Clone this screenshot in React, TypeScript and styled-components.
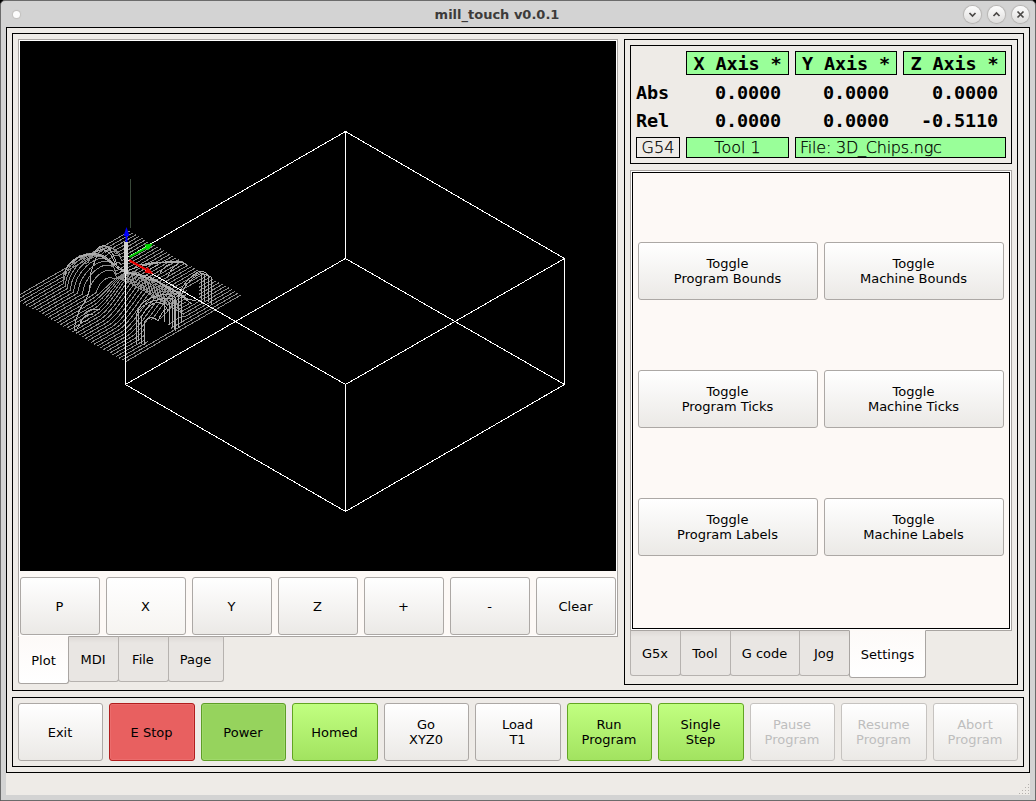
import React from "react";
import styled, { createGlobalStyle, css } from "styled-components";

const GlobalStyle = createGlobalStyle`
  * { box-sizing: border-box; }
  html, body { margin: 0; padding: 0; background: #000; }
  body { font-family: "DejaVu Sans", sans-serif; font-size: 13px; line-height: 15px; color: #000; }
`;

const Window = styled.div`
  width: 1036px;
  height: 801px;
  display: flex;
  flex-direction: column;
  background: #d3d3d3;
  border: 1px solid #6b6b6b;
  border-radius: 5px 5px 0 0;
  padding: 0 5px 5px;
  overflow: hidden;
`;

const TitleBar = styled.header`
  height: 26px;
  flex: none;
  display: grid;
  grid-template-columns: 76px 1fr 76px;
  align-items: center;
  margin: 0 -5px;
  padding: 0 6px 0 12px;
`;

const MenuDot = styled.span`
  width: 7px;
  height: 7px;
  border-radius: 50%;
  background: #fcfcfc;
  box-shadow: 0 0 1px 1px #c2c0be;
`;

const Title = styled.h1`
  margin: 0;
  padding-right: 48px;
  text-align: center;
  font-size: 13px;
  line-height: 15px;
  font-weight: bold;
  color: #3d3b3a;
`;

const WindowButtons = styled.div`
  display: flex;
  justify-content: flex-end;
  gap: 7px;
`;

const RoundButton = styled.span`
  width: 17px;
  height: 17px;
  border-radius: 50%;
  background: linear-gradient(#fdfdfd, #dedddc);
  box-shadow: 0 0 1px 1px #b4b2b0;
  display: grid;
  place-items: center;
`;

const Frame = styled.section`
  border: 1px solid #000;
  background: #eeebe7;
  padding: 5px;
  min-width: 0;
`;

const Client = styled(Frame)`
  height: 746px;
  flex: none;
  display: flex;
  flex-direction: column;
  gap: 6px;
`;

const Workspace = styled(Frame)`
  height: 658px;
  display: flex;
  gap: 6px;
`;

const TabbedPane = styled.div<{ $w: number }>`
  width: ${(p) => p.$w}px;
  flex: none;
  display: flex;
  flex-direction: column;
`;

const PaneBody = styled.div<{ $h: number }>`
  height: ${(p) => p.$h}px;
  border: 1px solid #a9a5a2;
  background: #fdf9f6;
  padding: 1px;
  box-shadow: inset 0 0 0 1px #fff;
`;

const Tabs = styled.div`
  display: flex;
  align-items: flex-start;
  margin-top: -1px;
`;

const Tab = styled.div<{ $w: number; $active?: boolean; $first?: boolean }>`
  width: ${(p) => p.$w}px;
  height: ${(p) => (p.$active ? 48 : 46)}px;
  margin-left: ${(p) => (p.$first ? 0 : -1)}px;
  padding: ${(p) => (p.$active ? "1px 0 0" : "0 1px 0 0")};
  display: grid;
  place-items: center;
  border: 1px solid ${(p) => (p.$active ? "#a9a5a2" : "#b6b2af")};
  border-top-color: ${(p) => (p.$active ? "#fdf9f6" : "#a9a5a2")};
  border-radius: 0 0 3px 3px;
  background: ${(p) =>
    p.$active ? "linear-gradient(#fdfaf8, #ffffff)" : "linear-gradient(#dedad7, #e9e6e3 6px)"};
  position: relative;
  z-index: ${(p) => (p.$active ? 1 : 0)};
`;

const Plot = styled.svg`
  display: block;
  width: 596px;
  height: 530px;
  background: #000;
`;

const KeyRow = styled.div`
  display: grid;
  grid-template-columns: repeat(7, 80px);
  gap: 6px;
  padding-top: 6px;
`;

type Tone = "plain" | "hover" | "red" | "power" | "green" | "disabled";

const tones = {
  plain: css`background: linear-gradient(#ffffff, #ebe9e6); border-color: #aca8a5;`,
  hover: css`background: linear-gradient(#ffffff, #f6f4f1); border-color: #aca8a5;`,
  red: css`background: #e86060; border-color: #b01d1d; box-shadow: inset 0 0 0 1px #eb6c6c;`,
  power: css`background: #96d35d; border-color: #5e9d27; box-shadow: inset 0 0 0 1px #9fd96a;`,
  green: css`background: linear-gradient(#c1ff80, #a2e360); border-color: #62a522;`,
  disabled: css`background: linear-gradient(#ffffff, #ebe9e6); border-color: #c6c3c0; color: #bebebe;`,
};

const Button = styled.button<{ $tone?: Tone }>`
  height: 58px;
  min-width: 0;
  padding: 0 1px 0 0;
  border: 1px solid;
  border-radius: 3px;
  font: inherit;
  color: #000;
  white-space: pre-line;
  text-align: center;
  ${(p) => tones[p.$tone ?? "plain"]}
`;

const SidePanel = styled(Frame)`
  width: 394px;
  display: flex;
  flex-direction: column;
  gap: 6px;
`;

const Readout = styled(Frame)`
  height: 119px;
  flex: none;
  display: grid;
  grid-template-columns: 44px 103px 102px 103px;
  grid-template-rows: 24px 22px 22px 21px;
  gap: 6px;
`;

const mono = css`
  font-family: "DejaVu Sans Mono", monospace;
  font-weight: bold;
  font-size: 18.5px;
  line-height: 24px;
  letter-spacing: -0.14px;
  white-space: pre;
`;

const AxisHead = styled.div`
  ${mono}
  line-height: 23px;
  border: 1px solid #000;
  background: #99ff99;
  text-align: center;
`;

const RowName = styled.div`
  ${mono}
`;

const Value = styled.div`
  ${mono}
  text-align: right;
  padding-right: 8px;
`;

const Info = styled.div<{ $plain?: boolean; $wide?: boolean }>`
  border: 1px solid #000;
  background: ${(p) => (p.$plain ? "transparent" : "#99ff99")};
  grid-column: ${(p) => (p.$wide ? "span 2" : "auto")};
  text-align: ${(p) => (p.$wide ? "left" : "center")};
  padding-left: ${(p) => (p.$wide ? 4 : 0)}px;
  font-size: 16px;
  line-height: 19px;
  font-weight: 200;
  letter-spacing: ${(p) => (p.$wide ? -0.22 : 0)}px;
  -webkit-text-stroke: 0.25px #000;
  white-space: nowrap;
`;

const SettingsGrid = styled.div`
  height: 457px;
  border: 1px solid #000;
  padding: 5px 5px 9px;
  display: grid;
  grid-template-columns: 180px 180px;
  grid-template-rows: repeat(3, 58px);
  column-gap: 6px;
  row-gap: 70px;
  align-content: center;
`;

const ActionBar = styled(Frame)`
  height: 70px;
  display: grid;
  grid-template-columns: 85px 86px 85px 86px 85px 86px 85px 86px 85px 86px 85px;
  gap: 6px;
`;

const StatusBar = styled.footer`
  flex: 1;
  background: #eeebe7;
  display: flex;
  align-items: flex-end;
  justify-content: flex-end;
  padding: 0 1px 1px;
`;

/* Toolpath: parallel passes over a relief, projected isometrically. */
const PASSES = 37;
const STEPS = 120;

const dome = (t: number, v: number, tc: number, vc: number, rt: number, rv: number, h: number) => {
  const d = ((t - tc) / rt) ** 2 + ((v - vc) / rv) ** 2;
  return d < 1 ? h * Math.sqrt(1 - d) : 0;
};

const ramp = (a: number, b: number, x: number) => {
  const u = Math.min(1, Math.max(0, (x - a) / (b - a)));
  return u * u * (3 - 2 * u);
};

const relief = (t: number, v: number) => {
  const left = dome(t, v, 0.19, 0.47, 0.16, 0.17, 20);
  const back = dome(t, v, 0.13, 0.665, 0.1, 0.1, 12);
  const crest = 0.54;
  const foot = 0.2 + 0.12 * (1 - ramp(0.3, 0.6, t));
  const rise = v < crest ? ramp(foot, crest + 0.08, v) / ramp(foot, crest + 0.08, crest) : 1 - ramp(crest, crest + 0.07, v);
  const hill = 24 * rise * ramp(0.25, 0.55, t) * (1 - ramp(0.86, 0.93, t));
  return Math.max(left, back, hill);
};

const passes = Array.from({ length: PASSES }, (_, i) => {
  const t = i / (PASSES - 1);
  let d = "";
  for (let s = 0; s <= STEPS; s++) {
    const v = s / STEPS;
    const x = 14 + 111 * t + 116 * v;
    const y = 298 + 64 * t - 67 * v - relief(t, v);
    d += `${s ? "L" : "M"}${x.toFixed(1)} ${y.toFixed(1)}`;
  }
  return d;
});

const ridges = [
  "M65 275Q66 262 79 257Q94 250 106 257Q113 264 125 271",
  "M70 264Q83 251 101 256Q111 262 120 270",
  "M92 256Q100 242 108 247Q115 255 117 266",
  "M96 252Q103 246 111 255L116 265",
  "M74 331Q76 312 86 300Q91 289 91 272L97 255",
  "M76 331Q80 320 88 321M79 326Q84 312 93 315M84 314Q91 307 100 310",
  "M117 268L128 273L150 278L176 292L192 304",
  "M120 271L148 276L180 293L188 300",
  "M128 272L158 282L180 297L196 301",
  "M129 270Q150 262 180 261L187 265",
  "M136 266Q158 260 182 263M150 269L158 265M160 273Q164 266 170 264M168 276Q171 268 178 264",
  "M136 344V316Q139 303 149 299Q165 291 175 297V331",
  "M138 341V311Q146 301 162 299L172 298V327",
  "M141 344V318Q149 301 160 303Q166 304 168 312",
  "M144 345V322Q151 314 158 321Q162 311 166 309",
  "M164 298V322M169 302V325M174 299V329M178 300V328M181 296V323M178 300Q181 282 198 272Q204 270 208 275V302",
  "M181 300Q182 282 202 273L211 277V305M201 273V299M204 274V301",
];

const Toolpath = () => (
  <g fill="none" stroke="#8c8c8c" strokeWidth={1} shapeRendering="crispEdges">
    {passes.map((d, i) => (
      <path key={i} d={d} />
    ))}
    <path d="M145 341V325L155 317L163 321L172 329L150 342Z" fill="#000" stroke="none" />
    <path d="M186 302V291L199 281V300L190 304Z" fill="#000" stroke="none" />
    <g stroke="#acacac">
      {ridges.map((d, i) => (
        <path key={i} d={d} />
      ))}
    </g>
  </g>
);

const Preview = () => (
  <Plot viewBox="20 41 596 530">
    <Toolpath />
    <path d="M130.5 179V228" stroke="#3a4a3a" shapeRendering="crispEdges" />
    <path
      d="M345.5 131.5L564.5 258.5V384.5L345.5 511.5L125.5 384.5V258.5ZM345.5 131.5V258.5L125.5 384.5M345.5 258.5L564.5 384.5M125.5 258.5L345.5 384.5V511.5M345.5 384.5L564.5 258.5"
      fill="none"
      stroke="#fff"
      shapeRendering="crispEdges"
    />
    <path d="M124 242h4v32h-4z" fill="#d0d0d0" />
    <path d="M126.5 242V234" stroke="#00f" strokeWidth={2} />
    <path d="M126.5 227L129.500 236H123.500Z" fill="#00f" />
    <path d="M129.500 257L147 247.500" stroke="#0c0" strokeWidth={2} />
    <path d="M153 243.500L144.500 244.500L148 250.500Z" fill="#0d0" />
    <path d="M129.500 260.500L146 269.500" stroke="#e00" strokeWidth={2} />
    <path d="M153.500 274L147.500 267L144.500 272.500Z" fill="#e00" />
  </Plot>
);

const plotKeys = ["P", "X", "Y", "Z", "+", "-", "Clear"];

const settings = [
  "Toggle\nProgram Bounds",
  "Toggle\nMachine Bounds",
  "Toggle\nProgram Ticks",
  "Toggle\nMachine Ticks",
  "Toggle\nProgram Labels",
  "Toggle\nMachine Labels",
];

const actions: { label: string; tone?: Tone }[] = [
  { label: "Exit" },
  { label: "E Stop", tone: "red" },
  { label: "Power", tone: "power" },
  { label: "Homed", tone: "green" },
  { label: "Go\nXYZ0" },
  { label: "Load\nT1" },
  { label: "Run\nProgram", tone: "green" },
  { label: "Single\nStep", tone: "green" },
  { label: "Pause\nProgram", tone: "disabled" },
  { label: "Resume\nProgram", tone: "disabled" },
  { label: "Abort\nProgram", tone: "disabled" },
];

const windowGlyphs = ["M1.500 3L4.500 6L7.500 3", "M1.500 6L4.500 3L7.500 6", "M1.500 1.500L7.500 7.500M7.500 1.500L1.500 7.500"];

const gripDots = [
  [10, 0], [10, 3], [7, 3], [10, 6], [7, 6], [4, 6], [10, 9], [7, 9], [4, 9], [1, 9],
];

export default function App() {
  return (
    <>
      <GlobalStyle />
      <Window>
        <TitleBar>
          <MenuDot />
          <Title>mill_touch v0.0.1</Title>
          <WindowButtons>
            {windowGlyphs.map((d) => (
              <RoundButton key={d}>
                <svg width="9" height="9" fill="none" stroke="#4a4846" strokeWidth="1.700">
                  <path d={d} />
                </svg>
              </RoundButton>
            ))}
          </WindowButtons>
        </TitleBar>
        <Client>
          <Workspace>
            <TabbedPane $w={600}>
              <PaneBody $h={598}>
                <Preview />
                <KeyRow>
                  {plotKeys.map((k) => (
                    <Button key={k} $tone={k === "X" ? "hover" : "plain"}>{k}</Button>
                  ))}
                </KeyRow>
              </PaneBody>
              <Tabs>
                <Tab $w={51} $active $first>Plot</Tab>
                <Tab $w={51}>MDI</Tab>
                <Tab $w={51}>File</Tab>
                <Tab $w={56}>Page</Tab>
              </Tabs>
            </TabbedPane>
            <SidePanel>
              <Readout>
                <span />
                <AxisHead>X Axis *</AxisHead>
                <AxisHead>Y Axis *</AxisHead>
                <AxisHead>Z Axis *</AxisHead>
                <RowName>Abs</RowName>
                <Value>0.0000</Value>
                <Value>0.0000</Value>
                <Value>0.0000</Value>
                <RowName>Rel</RowName>
                <Value>0.0000</Value>
                <Value>0.0000</Value>
                <Value>-0.5110</Value>
                <Info $plain>G54</Info>
                <Info>Tool 1</Info>
                <Info $wide>File: 3D_Chips.ngc</Info>
              </Readout>
              <TabbedPane $w={382}>
                <PaneBody $h={461}>
                  <SettingsGrid>
                    {settings.map((s) => (
                      <Button key={s}>{s}</Button>
                    ))}
                  </SettingsGrid>
                </PaneBody>
                <Tabs>
                  <Tab $w={51} $first>G5x</Tab>
                  <Tab $w={51}>Tool</Tab>
                  <Tab $w={70}>G code</Tab>
                  <Tab $w={51}>Jog</Tab>
                  <Tab $w={77} $active>Settings</Tab>
                </Tabs>
              </TabbedPane>
            </SidePanel>
          </Workspace>
          <ActionBar>
            {actions.map((a) => (
              <Button key={a.label} $tone={a.tone} disabled={a.tone === "disabled"}>
                {a.label}
              </Button>
            ))}
          </ActionBar>
        </Client>
        <StatusBar>
          <svg width="11" height="10" fill="#b5b1ae" shapeRendering="crispEdges">
            {gripDots.map(([x, y]) => (
              <rect key={`${x}-${y}`} x={x} y={y} width="1" height="1" />
            ))}
          </svg>
        </StatusBar>
      </Window>
    </>
  );
}
